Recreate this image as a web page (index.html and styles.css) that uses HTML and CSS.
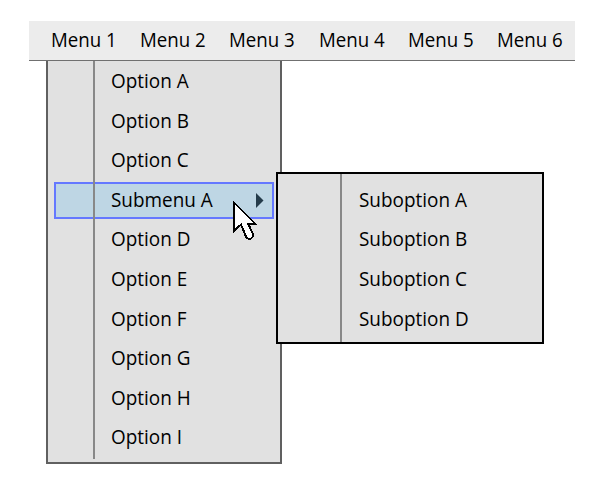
FILE: index.html
```html
<!DOCTYPE html>
<html lang="en">
<head>
<meta charset="utf-8">
<title>Menus</title>
<link rel="stylesheet" href="styles.css">
</head>
<body>
<nav class="menubar">
  <span class="label">Menu 1</span><span class="label">Menu 2</span><span class="label">Menu 3</span><span class="label">Menu 4</span><span class="label">Menu 5</span><span class="label">Menu 6</span>
</nav>
<div class="dropdown">
  <div class="item"><span class="label">Option A</span></div>
  <div class="item"><span class="label">Option B</span></div>
  <div class="item"><span class="label">Option C</span></div>
  <div class="item active"><span class="label">Submenu A</span>
    <svg class="arrow" width="8" height="15" viewBox="0 0 8 15"><path d="M0 0 7.5 7.5 0 15z" fill="#243b4a"/></svg>
    <div class="submenu">
      <div class="item"><span class="label">Suboption A</span></div>
      <div class="item"><span class="label">Suboption B</span></div>
      <div class="item"><span class="label">Suboption C</span></div>
      <div class="item"><span class="label">Suboption D</span></div>
    </div>
    <svg class="cursor" width="24" height="42" viewBox="0 0 24 42" shape-rendering="crispEdges"><path d="M1 2.500V31L8 24.500 13 36.500Q14 39.500 18 38.500 21 37 19.500 33L15 23.500H22z" fill="#fff" stroke="#000" stroke-width="2"/></svg>
  </div>
  <div class="item"><span class="label">Option D</span></div>
  <div class="item"><span class="label">Option E</span></div>
  <div class="item"><span class="label">Option F</span></div>
  <div class="item"><span class="label">Option G</span></div>
  <div class="item"><span class="label">Option H</span></div>
  <div class="item"><span class="label">Option I</span></div>
</div>
</body>
</html>
```
FILE: styles.css
```css
*, *::before { box-sizing: border-box; }
body {
  margin: 0;
  padding: 21px 0 0 29px;
  background: #fff;
  color: #000;
  font: 19.5px/39.6px "Open Sans", sans-serif;
}
.menubar {
  display: flex;
  width: 546px;
  height: 40px;
  padding-left: 22px;
  background: #ececec;
  border-bottom: 1px solid #707070;
}
.label {
  display: block;
  white-space: nowrap;
  transform: translateY(-1px) scaleX(.97);
  transform-origin: left;
}
.menubar .label { width: 89.2px; flex: none; transform: translateY(-1px) scaleX(.958); }
.dropdown {
  position: relative;
  width: 236px;
  height: 403px;
  margin-left: 17px;
  padding-top: 1px;
  border: 2px solid #606060;
  border-top: 0;
  background: #e1e1e1;
}
.dropdown::before {
  content: "";
  position: absolute;
  left: 45px;
  top: 0;
  width: 2px;
  height: 398px;
  background: #888;
  z-index: 1;
}
.item { position: relative; height: 39.6px; padding-left: 63px; }
.active::before {
  content: "";
  position: absolute;
  left: 6px;
  top: 1px;
  width: 220px;
  height: 37px;
  border: 2px solid #6478ff;
  background: #bed6e4;
}
.active > .label { position: relative; }
.arrow { position: absolute; left: 208px; top: 12px; }
.submenu {
  position: absolute;
  left: 228px;
  top: -9px;
  width: 268px;
  height: 172px;
  padding: 7px 0 0 18px;
  border: 2px solid #000;
  background: #e1e1e1;
  z-index: 2;
}
.submenu::before {
  content: "";
  position: absolute;
  left: 62px;
  top: 0;
  bottom: 0;
  width: 2px;
  background: #888;
}
.cursor { position: absolute; left: 185px; top: 19px; z-index: 3; }
```
